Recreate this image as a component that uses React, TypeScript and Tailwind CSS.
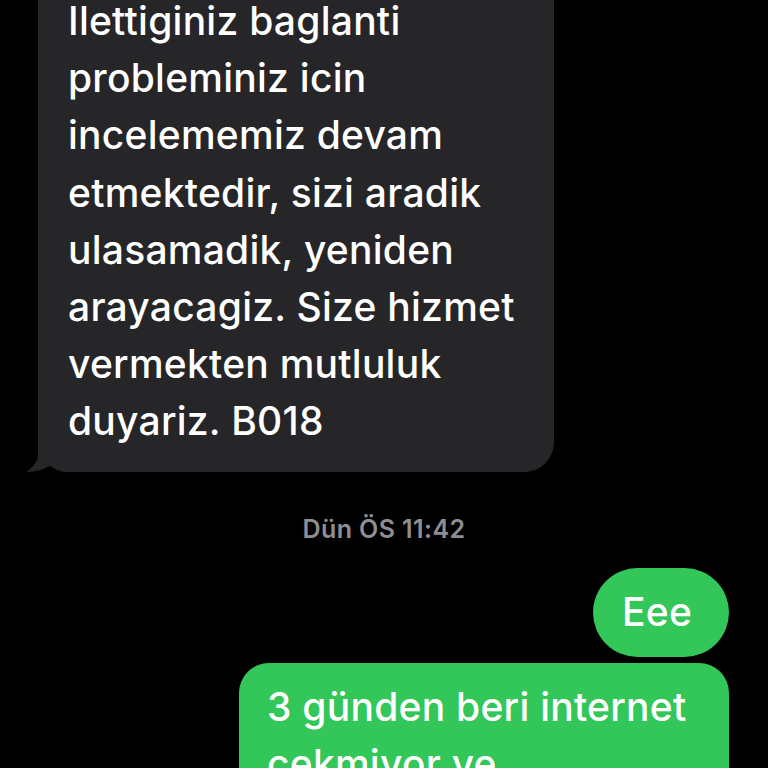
import React from 'react';

const incomingLines = [
    'Ilettiginiz baglanti',
    'probleminiz icin',
    'incelememiz devam',
    'etmektedir, sizi aradik',
    'ulasamadik, yeniden',
    'arayacagiz. Size hizmet',
    'vermekten mutluluk',
    'duyariz. B018',
];

const outgoingLines = ['3 günden beri internet', 'cekmiyor ve'];

const App = () => {
    return (
        <main
            className="w-[768px] h-[768px] overflow-hidden bg-black flex flex-col text-[39px] leading-[57.2px] font-medium tracking-[0.25px] text-white"
            style={{ fontFamily: 'Inter, "Noto Sans", sans-serif' }}
        >
            {/* gelen mesaj */}
            <div className="relative shrink-0 ml-[38px] mt-[-30px] w-[516px] bg-[#262629] rounded-[30px] pl-[30px] pt-[22px] pb-[22px]">
                {incomingLines.map(line => (
                    <div key={line} className="whitespace-nowrap">{line}</div>
                ))}
                <svg
                    className="absolute left-[-12px] bottom-0"
                    width="40"
                    height="32"
                    viewBox="0 0 40 32"
                >
                    <path d="M12 0 L12 14 C12 22 6 28 0 32 C10 32 20 29 27 24 C30 28 34 31 40 32 L40 0 Z" fill="#262629" />
                </svg>
            </div>

            {/* zaman */}
            <div className="shrink-0 mt-[43px] text-center text-[25px] leading-[28px] font-semibold tracking-[0.4px] text-[#8e8e93]">
                Dün ÖS 11:42
            </div>

            {/* giden mesajlar */}
            <div className="shrink-0 self-end mr-[39px] mt-[25px] w-[136px] h-[89px] rounded-full bg-[#33c659] pl-[29px] pt-[15px]">
                Eee
            </div>
            <div className="shrink-0 self-end mr-[39px] mt-[6px] w-[490px] rounded-[30px] bg-[#33c659] pl-[28px] pt-[15px] pb-[20px]">
                {outgoingLines.map(line => (
                    <div key={line} className="whitespace-nowrap">{line}</div>
                ))}
            </div>
        </main>
    );
};

export default App;
